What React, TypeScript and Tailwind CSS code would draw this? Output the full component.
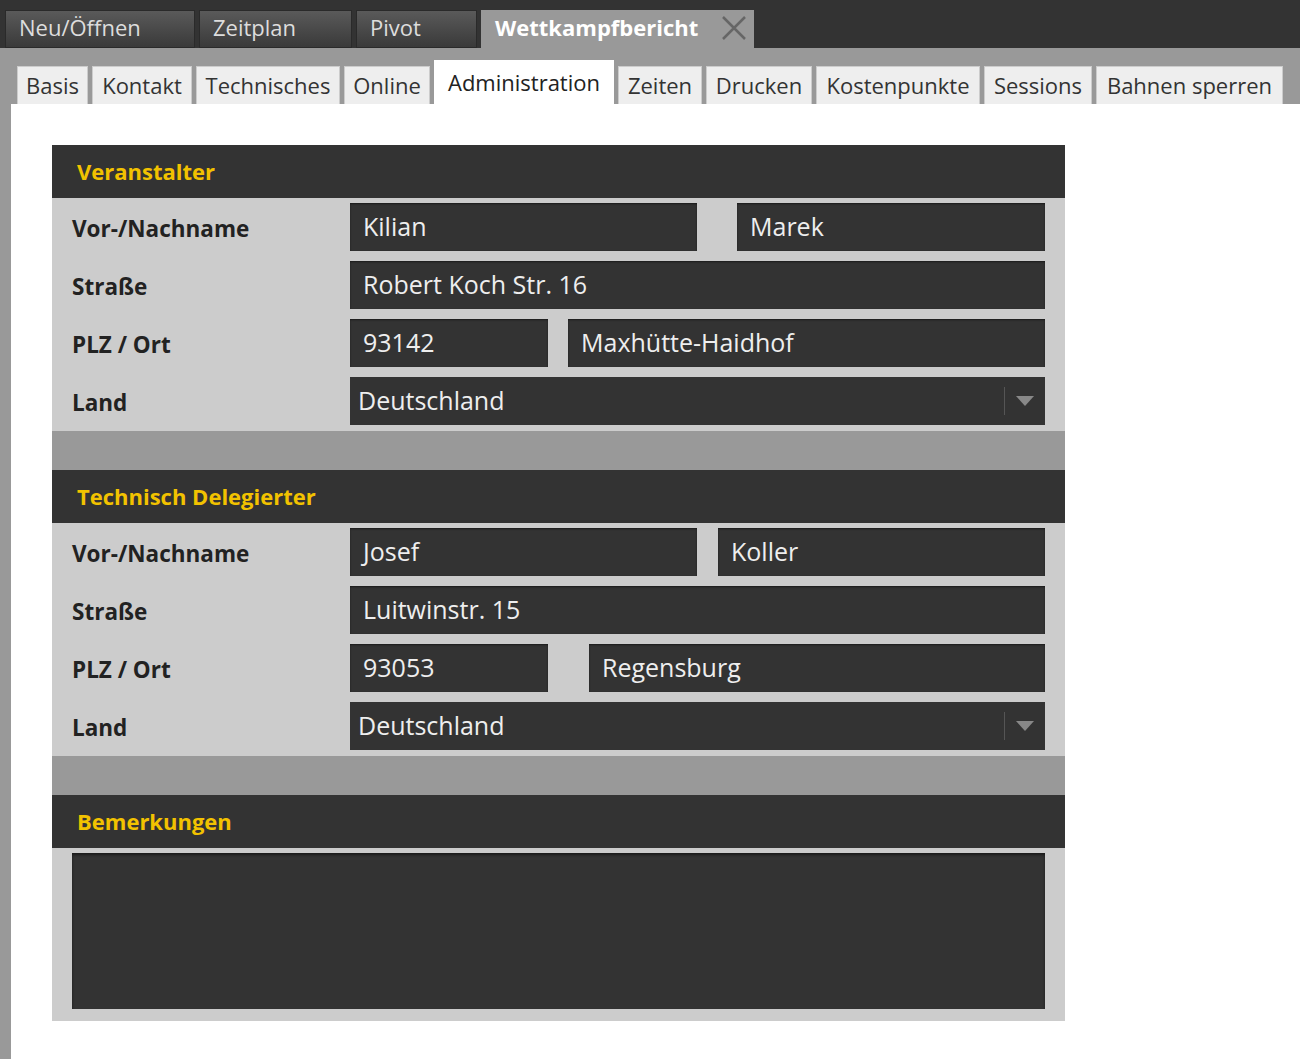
import React from 'react'

const topTabs = ['Neu/Öffnen', 'Zeitplan', 'Pivot']
const subTabs = [
    { t: 'Basis', w: 'w-[71px]' },
    { t: 'Kontakt', w: 'w-[100px]' },
    { t: 'Technisches', w: 'w-[144px]' },
    { t: 'Online', w: 'w-[86px]' },
    { t: 'Administration', w: 'w-[180px]' },
    { t: 'Zeiten', w: 'w-[84px]' },
    { t: 'Drucken', w: 'w-[106px]' },
    { t: 'Kostenpunkte', w: 'w-[164px]' },
    { t: 'Sessions', w: 'w-[108px]' },
    { t: 'Bahnen sperren', w: 'w-[187px]' },
]

interface IField {
    value: string;
    w: string;
}

const Field = ({ value, w }: IField) => (
    <div className={`${w} h-12 bg-[#333] flex items-center px-[13px] text-[25px] text-[#eee] shadow-[inset_0_1px_2px_rgba(0,0,0,0.5)]`}>
        {value}
    </div>
)

const Row = ({ label, children }: { label: string; children: React.ReactNode }) => (
    <div className="flex items-center h-12">
        <div className="w-[298px] pl-5 pt-1 text-[22.5px] font-bold text-[#222]">{label}</div>
        {children}
    </div>
)

const Select = ({ value }: { value: string }) => (
    <div className="w-[695px] h-12 bg-[#333] flex items-center pl-[8px] text-[25px] text-[#eee]">
        <span className="flex-1">{value}</span>
        <div className="w-px h-7 bg-[#555] mr-[10px]" />
        <svg width="20" height="12" viewBox="0 0 20 12" className="mr-[10px]"><path d="M1 1 L19 1 L10 11 Z" fill="#888" /></svg>
    </div>
)

const Header = ({ title }: { title: string }) => (
    <div className="h-[53px] bg-[#333] flex items-center pl-[25px] text-[22px] font-bold text-[#f2c200]">{title}</div>
)

interface IPerson {
    title: string;
    first: string;
    last: string;
    street: string;
    zip: string;
    city: string;
    gap1: string;
    w1: string;
    gap2: string;
    w2: string;
}

const Person = (p: IPerson) => (
    <>
        <Header title={p.title} />
        <div className="bg-[#ccc] pt-[5px] pb-[6px] flex flex-col gap-[10px]">
            <Row label="Vor-/Nachname">
                <Field value={p.first} w="w-[347px]" />
                <div className={p.gap1} />
                <Field value={p.last} w={p.w1} />
            </Row>
            <Row label="Straße">
                <Field value={p.street} w="w-[695px]" />
            </Row>
            <Row label="PLZ / Ort">
                <Field value={p.zip} w="w-[198px]" />
                <div className={p.gap2} />
                <Field value={p.city} w={p.w2} />
            </Row>
            <Row label="Land">
                <Select value="Deutschland" />
            </Row>
        </div>
        <div className="h-[39px] bg-[#999]" />
    </>
)

const App = () => {
    return (
        <div className="w-[1300px] h-[1059px] bg-white overflow-hidden" style={{ fontFamily: '"Open Sans", sans-serif' }}>
            {/* top tabs */}
            <div className="h-12 bg-[#333] flex items-end pl-[5px] gap-1">
                {topTabs.map((t) => (
                    <div key={t} className={`h-[38px] flex items-center pl-[13px] pb-[3px] text-[22px] text-[#ddd] bg-gradient-to-b from-[#5a5a5a] to-[#3a3a3a] border border-[#2a2a2a] ${t === 'Neu/Öffnen' ? 'w-[190px]' : t === 'Zeitplan' ? 'w-[153px]' : 'w-[121px]'}`}>
                        {t}
                    </div>
                ))}
                <div className="h-[38px] w-[273px] flex items-center pl-[14px] pb-[3px] bg-[#999] text-[22px] font-bold text-white">
                    <span className="flex-1">Wettkampfbericht</span>
                    <svg width="26" height="26" viewBox="0 0 26 26" className="mr-[7px]"><path d="M2 2 L24 24 M24 2 L2 24" stroke="#666" strokeWidth="2.5" /></svg>
                </div>
            </div>
            {/* sub tabs */}
            <div className="h-[56px] bg-[#999] flex items-end pl-[17px] gap-1">
                {subTabs.map(({ t, w }) => (
                    t === 'Administration'
                        ? <div key={t} className={`${w} h-[44px] flex items-center justify-center bg-white text-[22px] text-[#222] whitespace-nowrap`}>{t}</div>
                        : <div key={t} className={`${w} h-[38px] flex items-center justify-center bg-[#eee] border border-[#ccc] border-b-0 text-[22px] text-[#333] whitespace-nowrap`}>{t}</div>
                ))}
            </div>
            <div className="flex h-full">
                <div className="w-[11px] bg-[#999]" />
                <div className="pl-[41px] pt-[41px]">
                    <div className="w-[1013px]">
                        <Person title="Veranstalter" first="Kilian" last="Marek" street="Robert Koch Str. 16" zip="93142" city="Maxhütte-Haidhof" gap1="w-10" w1="w-[308px]" gap2="w-5" w2="w-[477px]" />
                        <Person title="Technisch Delegierter" first="Josef" last="Koller" street="Luitwinstr. 15" zip="93053" city="Regensburg" gap1="w-[21px]" w1="w-[327px]" gap2="w-[41px]" w2="w-[456px]" />
                        <Header title="Bemerkungen" />
                        <div className="bg-[#ccc] pt-[5px] pb-[12px] pl-5 pr-5">
                            <div className="h-[156px] bg-[#333] shadow-[inset_0_2px_3px_rgba(0,0,0,0.5)]" />
                        </div>
                    </div>
                </div>
            </div>
        </div>
    )
}

export default App
